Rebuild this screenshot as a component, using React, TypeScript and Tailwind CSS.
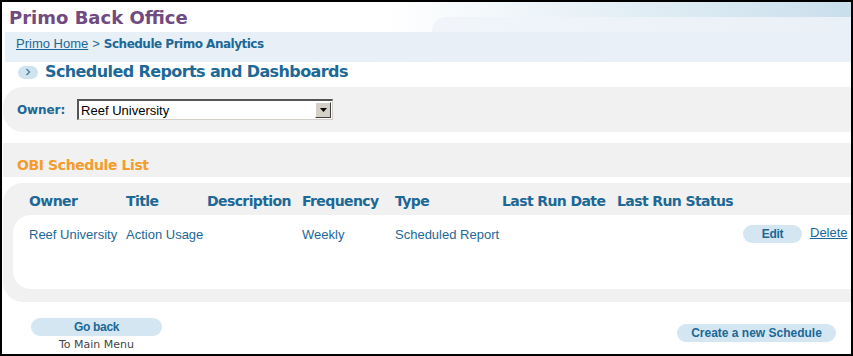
import React from "react";

const blue = "text-[#1c6896]";

function Chevron() {
  return (
    <div className="w-[20px] h-[13px] rounded-full bg-[#cfe3f0] flex items-center justify-center">
      <svg width="6" height="8" viewBox="0 0 6 8">
        <path d="M1.5 1 L4.5 4 L1.5 7" fill="none" stroke="#4f7e9c" strokeWidth="1.4" />
      </svg>
    </div>
  );
}

function Select() {
  return (
    <div className="w-[256px] h-[21px] border-t-2 border-l-2 border-t-[#555] border-l-[#555] border-b border-r border-b-[#d4d0c8] border-r-[#d4d0c8] bg-white flex items-center">
      <span className="flex-1 pl-[2px] text-[13px] text-black font-['Liberation_Sans'] leading-none">Reef University</span>
      <div className="w-[16px] h-[16px] mr-[1px] bg-[#d4d0c8] border-t border-l border-t-white border-l-white border-b border-r border-b-[#404040] border-r-[#404040] flex items-center justify-center">
        <svg width="7" height="4" viewBox="0 0 7 4">
          <path d="M0 0 H7 L3.5 4 Z" fill="#000" />
        </svg>
      </div>
    </div>
  );
}

const cols = ["w-[97px]", "w-[81px]", "w-[95px]", "w-[93px]", "w-[107px]", "w-[115px]", "w-[126px]"];

export default function App() {
  const headers = ["Owner", "Title", "Description", "Frequency", "Type", "Last Run Date", "Last Run Status"];
  const row = ["Reef University", "Action Usage", "", "Weekly", "Scheduled Report", "", ""];
  return (
    <div className="w-[853px] h-[356px] border-2 border-black bg-white overflow-hidden flex flex-col font-['Liberation_Sans']">
      {/* Header */}
      <div className="h-[30px] flex bg-gradient-to-r from-white from-45% to-[#c9dfec]">
        <div className="pl-[7px] pt-[5px] text-[18px] leading-[22px] font-bold font-['DejaVu_Sans'] text-[#714a80] w-[430px]">
          Primo Back Office
        </div>
        <div className="flex-1 flex flex-col">
          <div className="h-[15px]" />
          <div className="flex-1 rounded-tl-[14px] bg-gradient-to-r from-[#f1f5fa] to-[#eaf0f7]" />
        </div>
      </div>
      {/* Breadcrumb */}
      <div className="h-[30px] ml-[3px] bg-gradient-to-r from-[#e7eff7] to-[#eaf0f7] flex items-center pl-[11px] pb-[7px]">
        <span className={`text-[13px] underline ${blue} leading-none`}>Primo Home</span>
        <span className={`text-[13px] ${blue} leading-none mx-[4px]`}>&gt;</span>
        <span className={`text-[12px] font-bold font-['DejaVu_Sans'] tracking-[-0.5px] ${blue} leading-none`}>
          Schedule Primo Analytics
        </span>
      </div>
      {/* Page title */}
      <div className="h-[25px] flex items-center pl-[16px] gap-[7px] pb-[5px]">
        <Chevron />
        <span className={`text-[16px] font-bold font-['DejaVu_Sans'] tracking-[-0.6px] ${blue} leading-none`}>
          Scheduled Reports and Dashboards
        </span>
      </div>
      {/* Owner panel */}
      <div className="h-[45px] ml-[1px] rounded-l-[20px] bg-[#f1f1f1] flex items-center pl-[14px] gap-[12px]">
        <span className={`text-[12px] font-bold font-['DejaVu_Sans'] tracking-[-0.1px] ${blue} leading-none`}>Owner:</span>
        <Select />
      </div>
      {/* OBI band */}
      <div className="h-[34px] mt-[11px] ml-[1px] bg-[#f1f1f1] flex items-center pl-[14px] pt-[10px]">
        <span className="text-[14px] font-bold font-['DejaVu_Sans'] tracking-[-0.4px] text-[#f49c2c] leading-none">
          OBI Schedule List
        </span>
      </div>
      {/* Table panel */}
      <div className="h-[119px] mt-[6px] ml-[1px] rounded-l-[20px] bg-[#f1f1f1] flex flex-col">
        <div className="h-[32px] flex items-center pl-[26px] pt-[3px]">
          {headers.map((h, i) => (
            <div key={h} className={`${cols[i]} shrink-0 text-[14px] font-bold font-['DejaVu_Sans'] tracking-[-0.6px] ${blue} leading-none whitespace-nowrap`}>
              {h}
            </div>
          ))}
        </div>
        <div className="h-[74px] ml-[10px] rounded-l-[18px] bg-white flex items-start pl-[16px] pt-[10px]">
          <div className="flex items-center h-[18px]">
            {row.map((c, i) => (
              <div key={i} className={`${cols[i]} shrink-0 text-[13px] ${blue} leading-none whitespace-nowrap`}>
                {c}
              </div>
            ))}
            <div className={`w-[59px] h-[18px] rounded-full bg-[#d3e6f2] flex items-center justify-center text-[12px] font-bold ${blue} tracking-[-0.3px] leading-none`}>
              Edit
            </div>
            <span className={`ml-[8px] text-[13px] underline ${blue} leading-none -mt-[4px]`}>Delete</span>
          </div>
        </div>
      </div>
      {/* Bottom */}
      <div className="flex justify-between items-start pl-[29px] pr-[15px] pt-[16px]">
        <div className="flex flex-col items-center w-[131px]">
          <div className={`w-[131px] h-[18px] rounded-full bg-[#d3e6f2] flex items-center justify-center text-[12px] font-bold ${blue} tracking-[-0.3px] leading-none`}>
            Go back
          </div>
          <span className="mt-[2px] text-[11px] font-['DejaVu_Sans'] text-[#444] leading-[14px]">To Main Menu</span>
        </div>
        <div className={`mt-[6px] w-[159px] h-[18px] rounded-full bg-[#d3e6f2] flex items-center justify-center text-[12px] font-bold ${blue} leading-none`}>
          Create a new Schedule
        </div>
      </div>
    </div>
  );
}
